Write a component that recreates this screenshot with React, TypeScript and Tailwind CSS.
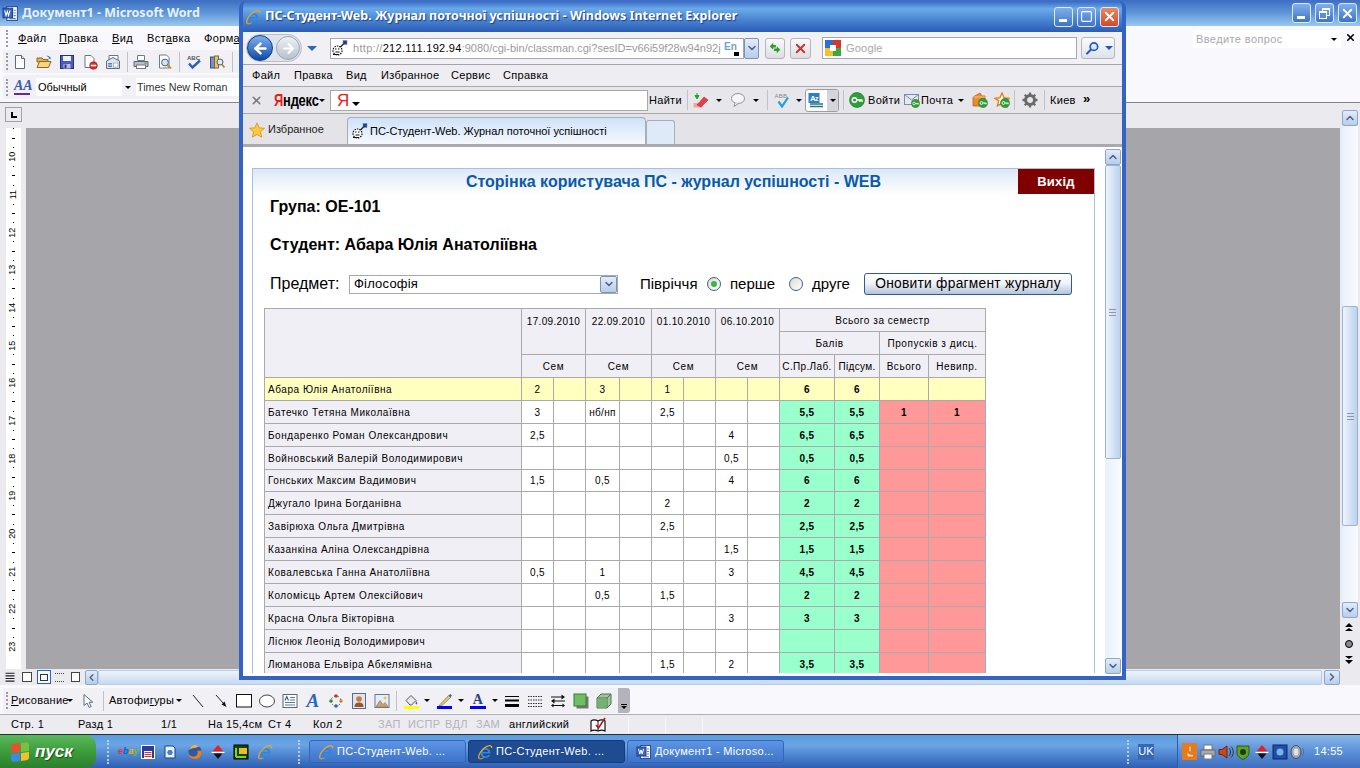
import type { ReactNode } from "react";
import { ArrowLeft, ArrowRight, ChevronDown, ChevronLeft, ChevronRight, ChevronUp, Square, X } from "lucide-react";

const Ic = ({ children, s = 16 }: { children: ReactNode; s?: number }) => (
  <svg viewBox="0 0 16 16" width={s} height={s} className="shrink-0">
    {children}
  </svg>
);

const Caret = ({ className = "" }: { className?: string }) => (
  <span className={`shrink-0 w-0 h-0 border-x-[3px] border-t-[3px] border-x-transparent border-t-black ${className}`} />
);

const Grip = ({ className = "" }: { className?: string }) => (
  <span className={`shrink-0 h-[17px] border-l-2 border-dotted border-[#9a9aa2] ${className}`} />
);

const Sep = ({ className = "" }: { className?: string }) => (
  <span className={`shrink-0 w-px h-[20px] bg-[#c2c1c8] ${className}`} />
);

const IeLogo = ({ s = 16 }: { s?: number }) => (
  <Ic s={s}>
    <path d="M13.4 9.6H5.6c.2 1.800 1.400 2.800 3 2.800 1.100 0 2-.5 2.600-1.300h2.100c-.9 1.900-2.700 3-4.800 3-3 0-5.100-2.100-5.100-5s2.200-5.100 5.100-5.100c3.200 0 5.200 2.400 4.900 5.600zM5.700 8h5.400c-.2-1.300-1.200-2.200-2.700-2.200S5.900 6.700 5.700 8z" fill="#2f86dc" fillRule="evenodd" />
    <path d="M2 14.500C.6 12 4.500 4.500 10 2.300c3-1.200 5-.7 4.700 1.800" fill="none" stroke="#eda521" strokeWidth="1.300" />
    <path d="M2 14.500c1 .8 3 .2 4.500-.6" fill="none" stroke="#eda521" strokeWidth="1" />
  </Ic>
);

const Favicon = () => (
  <Ic>
    <rect x="11" y="0.500" width="4" height="4" fill="#1d3f9c" stroke="#888" strokeWidth="0.500" />
    <path d="M11.500 4 7 8.500" stroke="#222" strokeWidth="1.300" />
    <circle cx="5.500" cy="10.500" r="4.500" fill="#fff" stroke="#111" strokeWidth="1.200" strokeDasharray="1.500 1" />
    <path d="M3 9h1.500M6 9h1.500M3.500 12h4" stroke="#111" strokeWidth="1" />
    <path d="M1 14.500h6" stroke="#111" strokeWidth="1" />
  </Ic>
);

const WordLogo = ({ s = 16 }: { s?: number }) => (
  <Ic s={s}>
    <rect x="4.500" y="1.500" width="10" height="13" fill="#fff" stroke="#2b4f98" />
    <rect x="1" y="3" width="9" height="9" fill="#3a68bb" stroke="#1d3f88" />
    <path d="M2.500 5l1.300 5 1.200-4 1.200 4 1.300-5" fill="none" stroke="#fff" strokeWidth="1" />
    <path d="M11 5h2M11 7.500h2M11 10h2M7 12.800h6" stroke="#5b7ab8" strokeWidth="1" />
  </Ic>
);

const DocNew = () => (
  <Ic>
    <path d="M3.500 1.500h6l3 3v10h-9z" fill="#fff" stroke="#5c6a80" />
    <path d="M9.500 1.500v3h3" fill="#dfe7f2" stroke="#5c6a80" />
  </Ic>
);
const FolderOpen = () => (
  <Ic>
    <path d="M1 4h5l1 1.500h5V8H1z" fill="#e0b44c" stroke="#8a6a1e" />
    <path d="M1 13.500 3.500 7.500H15l-2.500 6z" fill="#f6d57e" stroke="#8a6a1e" />
    <path d="M10 2c2-.8 3.500 0 4 1.500l.8-.6-.3 2.400-2.200-.8.7-.4C12.500 3 11.500 2.400 10 2z" fill="#2f78c8" />
  </Ic>
);
const Floppy = () => (
  <Ic>
    <rect x="1.500" y="1.500" width="13" height="13" fill="#4a5cc0" stroke="#26307a" />
    <rect x="4" y="2" width="8" height="5" fill="#eef0fa" />
    <rect x="4.500" y="10" width="7" height="4.500" fill="#b9bed4" />
    <rect x="5.500" y="10.500" width="2" height="3.500" fill="#2d3888" />
  </Ic>
);
const Perm = () => (
  <Ic>
    <path d="M3 1.500h6l3 3v9H3z" fill="#fff" stroke="#6a7486" />
    <circle cx="11.500" cy="11.500" r="3.800" fill="#d6301e" stroke="#8c1a10" strokeWidth="0.600" />
    <rect x="8.800" y="10.700" width="5.400" height="1.600" fill="#fff" />
  </Ic>
);
const MailDoc = () => (
  <Ic>
    <path d="M4 1.500h9v5H4z" fill="#fff" stroke="#6a7486" />
    <path d="M1.500 7 8 3.500 14.500 7v7.500h-13z" fill="#dfe3ea" stroke="#636c80" />
    <rect x="3" y="9" width="4" height="1.500" fill="#5e7fb8" />
    <rect x="8.500" y="9" width="4.500" height="4" fill="#f8f8fa" stroke="#7884a0" strokeWidth="0.500" />
    <rect x="3" y="11.500" width="4" height="1.500" fill="#5e7fb8" />
  </Ic>
);
const Printer = () => (
  <Ic>
    <path d="M4.500 1.500h7v5h-7z" fill="#fff" stroke="#70788a" />
    <path d="M1 7.500h14v5H1z" fill="#b8bec9" stroke="#5d6474" />
    <rect x="3.500" y="11" width="9" height="3.500" fill="#fff" stroke="#70788a" />
    <rect x="11.500" y="8.500" width="2" height="1.300" fill="#38b24a" />
  </Ic>
);
const Preview = () => (
  <Ic>
    <path d="M2.500 1h7l2.500 2.500V14H2.500z" fill="#fff" stroke="#6f7a8e" />
    <circle cx="8" cy="8.500" r="3.400" fill="#cfe2f6" stroke="#50607c" />
    <path d="m10.500 11 3.500 3.500" stroke="#c78a24" strokeWidth="2" />
  </Ic>
);
const Spell = () => (
  <Ic>
    <text x="1" y="6" fontSize="6" fontWeight="700" fontFamily="Liberation Sans" fill="#555">ABC</text>
    <path d="m3 9.500 3.500 4L14 6.500" fill="none" stroke="#2c5cc6" strokeWidth="2.400" />
  </Ic>
);
const Research = () => (
  <Ic>
    <rect x="1.500" y="3" width="4" height="11" fill="#7f8fc0" stroke="#3f4d80" />
    <rect x="5.500" y="2" width="4" height="12" fill="#e2c66e" stroke="#7f6a26" />
    <circle cx="11" cy="8" r="3" fill="#dbe8f7" stroke="#4d5c78" />
    <path d="m13 10.500 2.500 3" stroke="#b68323" strokeWidth="1.800" />
  </Ic>
);

const CursorIc = () => (
  <Ic><path d="M4 1.500v11l3-2.500 2.200 4.500 2-1L9 9.200h3.800z" fill="#fff" stroke="#5a6a8a" /></Ic>
);
const LineIc = () => (
  <Ic><path d="m3 2 10 12" stroke="#222" strokeWidth="1" /></Ic>
);
const ArrowLine = () => (
  <Ic>
    <path d="m3 2 8 9" stroke="#222" strokeWidth="1" />
    <path d="m13.500 14-5-2.500 3-3z" fill="#111" />
  </Ic>
);
const RectIc = () => (
  <Ic><rect x="0.500" y="1.500" width="15" height="12.500" fill="#fff" stroke="#111" /></Ic>
);
const OvalIc = () => (
  <Ic><ellipse cx="8" cy="8" rx="7.500" ry="6" fill="#fff" stroke="#444" /></Ic>
);
const TextBoxIc = () => (
  <Ic>
    <rect x="1" y="1.500" width="14" height="13" fill="#fff" stroke="#5d6474" />
    <path d="M8 4.500h5M8 7h5M3 9.500h10M3 12h10" stroke="#65748e" />
    <path d="M3 7.500 4.800 3.500 6.500 7.500" fill="none" stroke="#2d4f9e" strokeWidth="1.100" />
  </Ic>
);
const WordArt = () => (
  <span className="shrink-0 w-4 h-4 flex items-center justify-center text-[19px] leading-none font-bold italic text-[#2c62c0] [font-family:'Liberation_Serif',serif]">A</span>
);
const Diagram = () => (
  <Ic>
    <circle cx="8" cy="3" r="1.800" fill="#d0382c" />
    <circle cx="3" cy="8" r="1.800" fill="#3b8f3e" />
    <circle cx="13" cy="8" r="1.800" fill="#d9a521" />
    <circle cx="8" cy="13" r="1.800" fill="#2d62c4" />
    <circle cx="8" cy="8" r="5" fill="none" stroke="#555" strokeDasharray="1.500 2" />
  </Ic>
);
const Clip = () => (
  <Ic>
    <rect x="1.500" y="0.500" width="13" height="15" fill="#dfe4ee" stroke="#5f6b84" />
    <circle cx="8" cy="6" r="2.800" fill="#c97b3c" />
    <path d="M3.500 14c0-3.500 2-4.500 4.500-4.500s4.500 1 4.500 4.500z" fill="#99562a" />
  </Ic>
);
const Pic = () => (
  <Ic>
    <rect x="1" y="1.500" width="14" height="13" fill="#e4eef9" stroke="#6c7890" />
    <path d="m2 13.500 4-6 3 4 2-2 3 4z" fill="#d29f6a" stroke="#8a5f33" strokeWidth="0.500" />
    <circle cx="11" cy="5" r="1.500" fill="#f0c83c" />
  </Ic>
);
const Bucket = () => (
  <Ic>
    <path d="m3 7.500 5-5 5 5-4.500 4.500H7z" fill="#e9e9f0" stroke="#555" />
    <path d="M13 8c1.200 1.500 1.600 2.500 1 3.200-.7.300-1.400-.2-1.400-1z" fill="#2c62c0" />
    <rect x="1" y="13" width="15" height="3" fill="#ffff00" />
  </Ic>
);
const Pen = () => (
  <Ic>
    <path d="M3 11.500 11.500 2.500l2 2L5 12.500l-3 .5z" fill="#e9c46a" stroke="#6d6150" strokeWidth="0.600" />
    <path d="M11.500 2.500l2 2 1.500-2-1.500-1.500z" fill="#3f68c6" />
    <rect x="0" y="13" width="15" height="3" fill="#0000ff" />
  </Ic>
);
const FontColor = () => (
  <span className="shrink-0 w-4 h-4 relative flex justify-center text-[14px] leading-[13px] font-bold text-[#2b3f88] [font-family:'Liberation_Serif',serif]">
    A
    <span className="absolute left-0 right-0 bottom-0 h-[3px] bg-[#0000ff]" />
  </span>
);
const Lines = () => (
  <Ic><path d="M1 3h14v1H1zM1 6.500h14v2H1zM1 11h14v3H1z" fill="#000" /></Ic>
);
const Dashes = () => (
  <Ic><path d="M1 3.500h15M1 7h15M1 10.500h15M1 13.500h15" stroke="#333" strokeDasharray="1.500 1" /></Ic>
);
const Arrows = () => (
  <Ic>
    <path d="M1 4h11M4 8h11M2 12.500h12" stroke="#111" />
    <path d="m15 4-3.500-2.500v5zM1 8l3.500-2.500v5zM1 12.500l2.500-2v4zM15 12.500l-2.500-2v4z" fill="#111" />
  </Ic>
);
const ShadowBox = () => (
  <Ic>
    <rect x="3.500" y="3.500" width="12" height="12" fill="#777" />
    <rect x="1" y="1" width="12" height="12" fill="#6dbf62" stroke="#3b7a38" />
  </Ic>
);
const Cube = () => (
  <Ic>
    <path d="M1 5l4-4h10v10l-4 4H1z" fill="#9bc89a" stroke="#556f55" />
    <path d="M1 5h10v10M11 5l4-4" fill="none" stroke="#556f55" />
    <path d="M1.500 5.500h9v9h-9z" fill="#72b46e" />
  </Ic>
);
const Book = () => (
  <Ic>
    <path d="M1 4c2-1.500 4.500-1.500 7 0 2.500-1.500 5-1.500 7 0v10c-2-1-4.500-1-7 0-2.500-1-5-1-7 0z" fill="#fff" stroke="#111" strokeWidth="1.200" />
    <path d="M8 4v10" stroke="#111" />
    <path d="m6 8 2.500 3L15 1" fill="none" stroke="#b01818" strokeWidth="1.600" />
  </Ic>
);

const Highlighter = () => (
  <Ic>
    <rect x="0.500" y="11" width="9" height="4.500" fill="#f3a2a8" />
    <path d="m4 13 7-8 4 3-7 7z" fill="#ea3a44" stroke="#a31f28" strokeWidth="0.500" />
    <path d="M4 1v3M2 3.500 4 7l2-3.500z" fill="#27a02c" stroke="#27a02c" />
  </Ic>
);
const Bubble = () => (
  <Ic>
    <ellipse cx="8" cy="6.500" rx="6.500" ry="5" fill="#f6f6f9" stroke="#8d929c" />
    <path d="M5 11 4 14.500 8.500 11.500" fill="#f6f6f9" stroke="#8d929c" />
  </Ic>
);
const AbcCheck = () => (
  <Ic>
    <text x="0.500" y="6" fontSize="6" fontFamily="Liberation Sans" fill="#888">ABB</text>
    <path d="m4.500 9.500 3.500 5 6-9" fill="none" stroke="#1fa0ee" strokeWidth="2.200" />
  </Ic>
);
const Translate = () => (
  <Ic>
    <rect x="0.500" y="1" width="11" height="10" fill="#2d7fc8" />
    <text x="2" y="9" fontSize="8" fontWeight="700" fontFamily="Liberation Sans" fill="#fff">A</text>
    <text x="7" y="9" fontSize="7" fontWeight="700" fontFamily="Liberation Sans" fill="#fff">z</text>
    <path d="M2 12h13M2 14.500h13" stroke="#2a7474" strokeWidth="1.500" />
  </Ic>
);
const KeyBall = ({ s = 16 }: { s?: number }) => (
  <Ic s={s}>
    <circle cx="8" cy="8" r="7.500" fill="#2e9e38" stroke="#1b6e24" strokeWidth="0.600" />
    <circle cx="5.500" cy="8" r="2.300" fill="none" stroke="#fff" strokeWidth="1.400" />
    <path d="M8 8h5.500M11 8v2M13 8v2" stroke="#fff" strokeWidth="1.300" />
  </Ic>
);
const Envelope = () => (
  <span className="shrink-0 relative w-[17px] h-[16px]">
    <Ic>
      <rect x="0.500" y="2.500" width="14" height="10" fill="#e2e8f4" stroke="#7f8ba4" />
      <path d="m.5 2.500 7 5.500 7-5.500" fill="none" stroke="#7f8ba4" />
    </Ic>
    <span className="absolute right-0 bottom-0"><KeyBall s={9} /></span>
  </span>
);
const Wallet = () => (
  <span className="shrink-0 relative w-[18px] h-[17px]">
    <Ic>
      <path d="M1 5 8 1l2 3h3v10H1z" fill="#ec8a2c" stroke="#b05a12" strokeWidth="0.700" />
      <path d="M1 5h12" stroke="#f6c080" />
    </Ic>
    <span className="absolute right-0 bottom-0"><KeyBall s={10} /></span>
  </span>
);
const StarKey = () => (
  <span className="shrink-0 relative w-[18px] h-[17px]">
    <Ic>
      <path d="m8 1 2.100 4.800 5.100.5-3.900 3.400 1.200 5.100L8 11.200l-4.500 2.600 1.200-5.100L.8 6.300l5.100-.5z" fill="#fff" stroke="#e8801a" strokeWidth="1.400" />
    </Ic>
    <span className="absolute right-0 bottom-0"><KeyBall s={10} /></span>
  </span>
);
const Gear = () => (
  <Ic>
    <circle cx="8" cy="8" r="4.500" fill="none" stroke="#6a6a6a" strokeWidth="3" />
    <path d="M8 .5v3M8 12.500v3M.5 8h3M12.500 8h3M2.700 2.700l2.100 2.100M11.200 11.200l2.100 2.100M2.700 13.300l2.100-2.100M11.200 4.800l2.100-2.100" stroke="#6a6a6a" strokeWidth="2.300" />
  </Ic>
);
const StarFav = () => (
  <Ic>
    <path d="m8 .8 2.200 5 5.300.5-4 3.600 1.200 5.300L8 12.500l-4.700 2.700 1.200-5.300-4-3.600 5.300-.5z" fill="#fbc93a" stroke="#d08a12" strokeWidth="0.700" />
  </Ic>
);

const XpFlag = () => (
  <span className="shrink-0 grid grid-cols-2 gap-[1px] w-[18px] h-[18px] -skew-y-6">
    <span className="bg-[#e8522a] rounded-tl-[3px]" />
    <span className="bg-[#7cc13e] rounded-tr-[3px]" />
    <span className="bg-[#3d8be0] rounded-bl-[3px]" />
    <span className="bg-[#f4c12e] rounded-br-[3px]" />
  </span>
);

const XpBtn = ({ children, close = false }: { children: ReactNode; close?: boolean }) => (
  <span
    className={`shrink-0 w-[19px] h-[20px] rounded-[3px] border border-[#dfe9f8] flex items-center justify-center text-white ${
      close ? "bg-gradient-to-b from-[#e58a64] to-[#cf4a26]" : "bg-gradient-to-b from-[#7fb0ea] to-[#3f73c8]"
    }`}
  >
    {children}
  </span>
);

const ScrollBtn = ({ children, className = "" }: { children: ReactNode; className?: string }) => (
  <span className={`shrink-0 flex items-center justify-center rounded-[2px] border border-[#8fa6c8] bg-gradient-to-b from-[#e2ecfa] to-[#b7cdea] text-[#4c6185] ${className}`}>
    {children}
  </span>
);

const Ruler = () => (
  <div className="w-[15px] h-full bg-white overflow-hidden shrink-0">
    <div className="-mt-[4px]">
      {[10, 11, 12, 13, 14, 15, 16, 17, 18, 19, 20, 21, 22, 23].map((n) => (
        <div key={n} className="h-[37.7px] flex flex-col items-center text-black">
          <span className="h-[9.4px] flex items-center"><span className="w-px h-px bg-black" /></span>
          <span className="h-[9.4px] flex items-center"><span className="w-[3px] h-px bg-black" /></span>
          <span className="h-[9.4px] flex items-center"><span className="w-px h-px bg-black" /></span>
          <span className="h-[9.4px] flex items-center justify-center text-[9px] leading-none -rotate-90 whitespace-nowrap">{n}</span>
        </div>
      ))}
    </div>
  </div>
);

const WordScroll = () => (
  <div className="w-[20px] h-full shrink-0 bg-[#ebeaef] flex flex-col pl-[2px] pt-[7px]">
    <ScrollBtn className="w-[16px] h-[16px]"><ChevronUp size={12} strokeWidth={3} /></ScrollBtn>
    <div className="w-[16px] h-[180px] bg-gradient-to-r from-[#e9f1fd] to-[#f8fbff]" />
    <div className="w-[16px] h-[220px] rounded-[2px] border border-[#9db3d2] bg-gradient-to-r from-[#eef4fd] to-[#bcd2ee] flex items-center justify-center">
      <span className="w-[7px] h-[7px] border-y border-[#8b98ad] flex items-center"><span className="w-full h-px bg-[#8b98ad]" /></span>
    </div>
    <div className="w-[16px] h-[76px] bg-gradient-to-r from-[#e9f1fd] to-[#f8fbff]" />
    <ScrollBtn className="w-[16px] h-[16px]"><ChevronDown size={12} strokeWidth={3} /></ScrollBtn>
    <div className="flex flex-col items-center w-[14px] mt-[5px] gap-[8px]">
      <span className="h-[9px] flex flex-col items-center"><Caret className="rotate-180 border-x-[4px] border-t-[4px]" /><Caret className="rotate-180 border-x-[4px] border-t-[3px] mt-px" /></span>
      <span className="w-[8px] h-[8px] rounded-full bg-[#888] border border-black" />
      <span className="h-[9px] flex flex-col items-center"><Caret className="border-x-[4px] border-t-[3px]" /><Caret className="border-x-[4px] border-t-[4px] mt-px" /></span>
    </div>
  </div>
);

type Cell = string;
const rows: { name: string; v: Cell[]; a: string; b: string; abs?: [string, string]; h?: string; me?: boolean }[] = [
  { name: "Абара Юлія Анатоліївна", v: ["2", "", "3", "", "1", "", "", ""], a: "6", b: "6", me: true },
  { name: "Батечко Тетяна Миколаївна", v: ["3", "", "нб/нп", "", "2,5", "", "", ""], a: "5,5", b: "5,5", abs: ["1", "1"] },
  { name: "Бондаренко Роман Олександрович", v: ["2,5", "", "", "", "", "", "4", ""], a: "6,5", b: "6,5" },
  { name: "Войновський Валерій Володимирович", v: ["", "", "", "", "", "", "0,5", ""], a: "0,5", b: "0,5" },
  { name: "Гонських Максим Вадимович", v: ["1,5", "", "0,5", "", "", "", "4", ""], a: "6", b: "6", h: "h-[22px]" },
  { name: "Джугало Ірина Богданівна", v: ["", "", "", "", "2", "", "", ""], a: "2", b: "2" },
  { name: "Завірюха Ольга Дмитрівна", v: ["", "", "", "", "2,5", "", "", ""], a: "2,5", b: "2,5" },
  { name: "Казанкіна Аліна Олександрівна", v: ["", "", "", "", "", "", "1,5", ""], a: "1,5", b: "1,5" },
  { name: "Ковалевська Ганна Анатоліївна", v: ["0,5", "", "1", "", "", "", "3", ""], a: "4,5", b: "4,5" },
  { name: "Коломієць Артем Олексійович", v: ["", "", "0,5", "", "1,5", "", "", ""], a: "2", b: "2" },
  { name: "Красна Ольга Вікторівна", v: ["", "", "", "", "", "", "3", ""], a: "3", b: "3" },
  { name: "Ліснюк Леонід Володимирович", v: ["", "", "", "", "", "", "", ""], a: "", b: "" },
  { name: "Люманова Ельвіра Абкелямівна", v: ["", "", "", "", "1,5", "", "2", ""], a: "3,5", b: "3,5" },
];

const cell = "border border-[#aaaaaa] p-0 text-center align-middle";
const head = `${cell} bg-[#f0eff5] font-normal tracking-[0.55px]`;

const Journal = () => (
  <table className="table-fixed border-collapse w-[722px] text-[10px] tracking-[0.35px] text-black">
    <colgroup>
      <col className="w-[257px]" />
      <col className="w-[32px]" />
      <col className="w-[32px]" />
      <col className="w-[34px]" />
      <col className="w-[32px]" />
      <col className="w-[32px]" />
      <col className="w-[32px]" />
      <col className="w-[32px]" />
      <col className="w-[32px]" />
      <col className="w-[55px]" />
      <col className="w-[45px]" />
      <col className="w-[49px]" />
      <col className="w-[57px]" />
    </colgroup>
    <thead>
      <tr className="h-[23px]">
        <th rowSpan={3} className={head} />
        {["17.09.2010", "22.09.2010", "01.10.2010", "06.10.2010"].map((d) => (
          <th key={d} colSpan={2} rowSpan={2} className={`${cell} bg-[#f0eff5] font-normal !align-top pt-[5px]`}>{d}</th>
        ))}
        <th colSpan={4} className={head}>Всього за семестр</th>
      </tr>
      <tr className="h-[23px]">
        <th colSpan={2} className={head}>Балів</th>
        <th colSpan={2} className={head}>Пропусків з дисц.</th>
      </tr>
      <tr className="h-[23px]">
        {[0, 1, 2, 3].map((i) => (
          <th key={i} colSpan={2} className={head}>Сем</th>
        ))}
        <th className={`${cell} bg-[#f0eff5] font-normal`}>С.Пр.Лаб.</th>
        <th className={`${cell} bg-[#f0eff5] font-normal`}>Підсум.</th>
        <th className={head}>Всього</th>
        <th className={head}>Невипр.</th>
      </tr>
    </thead>
    <tbody>
      {rows.map((r) => (
        <tr key={r.name} className={r.h ?? "h-[23px]"}>
          <td className={`${cell} !text-left pl-[3px] tracking-[0.55px] ${r.me ? "bg-[#ffffc0]" : "bg-[#f0eff5]"}`}>{r.name}</td>
          {r.v.map((v, i) => (
            <td key={i} className={`${cell} ${r.me ? "bg-[#ffffc0]" : "bg-white"}`}>{v}</td>
          ))}
          <td className={`${cell} font-bold ${r.me ? "bg-[#ffffc0]" : "bg-[#99ffcc]"}`}>{r.a}</td>
          <td className={`${cell} font-bold ${r.me ? "bg-[#ffffc0]" : "bg-[#99ffcc]"}`}>{r.b}</td>
          <td className={`${cell} font-bold ${r.me ? "bg-[#ffffc0]" : "bg-[#ff9999]"}`}>{r.abs?.[0]}</td>
          <td className={`${cell} font-bold ${r.me ? "bg-[#ffffc0]" : "bg-[#ff9999]"}`}>{r.abs?.[1]}</td>
        </tr>
      ))}
    </tbody>
  </table>
);

const IeWindow = () => (
  <div className="absolute left-[239px] top-[1px] w-[887px] h-[679px] rounded-t-[7px] border-x-[4px] border-b-[4px] border-[#3363c4] bg-[#3363c4] flex flex-col overflow-hidden">
    {/* title */}
    <div className="h-[31px] shrink-0 flex items-center -mx-[4px] px-[6px] bg-gradient-to-b from-[#3a68c6] via-[#6aaae8] via-25% to-[#2b5cb6] text-white">
      <IeLogo />
      <span className="ml-[4px] text-[12.5px] font-bold [font-family:'Noto_Sans',sans-serif] [text-shadow:1px_1px_1px_#1a3f88] whitespace-nowrap">
        ПС-Студент-Web. Журнал поточної успішності - Windows Internet Explorer
      </span>
      <span className="ml-auto flex gap-[4px] mr-[1px]">
        <XpBtn><span className="w-[8px] h-[3px] bg-white mt-[8px] -ml-[2px]" /></XpBtn>
        <XpBtn><Square size={13} strokeWidth={2} /></XpBtn>
        <XpBtn close><X size={15} strokeWidth={3} /></XpBtn>
      </span>
    </div>

    {/* nav row */}
    <div className="h-[33px] shrink-0 flex items-center bg-[#f1f0f4] text-[11px] border-b border-[#a4a4a8]">
      <span className="ml-[3px] w-[56px] h-[28px] shrink-0 rounded-full bg-[#dfe3ea] border border-[#b9bec8] flex items-center justify-between">
        <span className="w-[26px] h-[26px] rounded-full bg-gradient-to-b from-[#7fb0ee] to-[#0f48a8] border border-[#0e3c8c] flex items-center justify-center text-white">
          <ArrowLeft size={17} strokeWidth={3.500} />
        </span>
        <span className="w-[24px] h-[24px] mr-px rounded-full bg-gradient-to-b from-[#eef1f5] to-[#b5c0d0] border border-[#9aa6b6] flex items-center justify-center text-white">
          <ArrowRight size={15} strokeWidth={3.500} />
        </span>
      </span>
      <Caret className="ml-[5px] border-x-[5px] border-t-[5px] !border-t-[#2c66b8]" />
      <span className="ml-[13px] w-[414px] h-[21px] shrink-0 bg-white border border-[#a5a8ae] flex items-center overflow-hidden whitespace-nowrap">
        <span className="ml-px"><Favicon /></span>
        <span className="ml-[5px] w-[369px] tracking-[0.3px] text-[#9a9a9f]">
          http://<span className="text-black">212.111.192.94</span><span className="tracking-[0px]">:9080/cgi-bin/classman.cgi?sesID=v66i59f28w94n92j</span>
        </span>
        <span className="relative ml-[2px] w-[15px] h-[15px] text-[10px] font-bold leading-[11px] text-[#6ea2d8]">
          En
          <span className="absolute right-0 bottom-0 w-[5px] h-[4px] bg-black" />
        </span>
      </span>
      <ScrollBtn className="w-[15px] h-[21px] !border-[#7d93b4]"><ChevronDown size={12} strokeWidth={3} /></ScrollBtn>
      <span className="ml-[6px] w-[20px] h-[21px] shrink-0 rounded-[3px] border border-[#b4b6bc] bg-gradient-to-b from-[#fafafc] to-[#dcdce2] flex items-center justify-center">
        <Ic s={14}>
          <path d="M2 6 6 2v2.500h3V7.500H6V10zM14 10l-4 4v-2.500H7V8.500h3V6z" fill="#2f9a2e" />
        </Ic>
      </span>
      <span className="ml-[5px] w-[21px] h-[21px] shrink-0 rounded-[3px] border border-[#b4b6bc] bg-gradient-to-b from-[#fafafc] to-[#dcdce2] flex items-center justify-center text-[#c8342a]">
        <X size={15} strokeWidth={3} />
      </span>
      <span className="ml-[11px] w-[255px] h-[22px] shrink-0 bg-white border border-[#a5a8ae] flex items-center">
        <span className="relative w-[16px] h-[16px] ml-[2px] shrink-0 grid grid-cols-2">
          <span className="bg-[#2d6fd8]" />
          <span className="bg-[#d8382c]" />
          <span className="bg-[#f4c12e]" />
          <span className="bg-[#3fa648]" />
          <span className="absolute inset-[5px] bg-white" />
        </span>
        <span className="ml-[5px] text-[#a6a6aa] tracking-[0.2px]">Google</span>
      </span>
      <span className="ml-[4px] w-[34px] h-[22px] shrink-0 rounded-[3px] border border-[#b4b6bc] bg-gradient-to-b from-[#fbfbfd] to-[#dfe2ea] flex items-center">
        <span className="w-[21px] flex justify-center">
          <Ic s={15}>
            <circle cx="9.500" cy="6" r="4" fill="#dceafc" stroke="#1d57c8" strokeWidth="1.800" />
            <path d="M6.500 9 1.500 14" stroke="#1d57c8" strokeWidth="2.200" />
          </Ic>
        </span>
        <Caret className="ml-[2px] border-x-[4px] border-t-[4px] !border-t-[#1d57c8]" />
      </span>
    </div>

    {/* menu row */}
    <div className="h-[22px] shrink-0 flex items-center pl-[9px] bg-[#eeedf1] text-[11px] tracking-[0.3px] text-black border-b border-[#a9a9ad]">
      <span className="w-[42px]">Файл</span>
      <span className="w-[52px]">Правка</span>
      <span className="w-[35px]">Вид</span>
      <span className="w-[70px]">Избранное</span>
      <span className="w-[52px]">Сервис</span>
      <span>Справка</span>
    </div>

    {/* yandex row */}
    <div className="h-[27px] shrink-0 flex items-center bg-[#e7e6eb] text-[11px] tracking-[0.3px] text-black border-b border-[#a9a9ad]">
      <X size={13} strokeWidth={3} className="ml-[7px] text-[#7b7b80] shrink-0" />
      <span className="ml-[11px] w-[40px] text-[17px] font-bold leading-none tracking-[-0.3px] whitespace-nowrap origin-left scale-x-[0.76]">
        <span className="text-[#e8201a]">Я</span>ндекс
      </span>
      <Caret className="ml-[5px]" />
      <span className="ml-[5px] w-[318px] h-[21px] shrink-0 bg-white border border-[#a5a8ae] flex items-center pl-[6px]">
        <span className="text-[#e8201a] text-[17px] leading-none">Я</span>
        <Caret className="ml-[2px] mt-[8px] border-x-[4px] border-t-[4px]" />
      </span>
      <span className="ml-px w-[33px]">Найти</span>
      <Sep className="ml-[5px]" />
      <span className="ml-[5px]"><Highlighter /></span>
      <Caret className="ml-[7px]" />
      <span className="ml-[8px]"><Bubble /></span>
      <Caret className="ml-[7px]" />
      <Sep className="ml-[8px]" />
      <span className="ml-[6px]"><AbcCheck /></span>
      <Caret className="ml-[6px]" />
      <span className="ml-[3px] w-[34px] h-[23px] shrink-0 rounded-[3px] border border-[#9c9ca2] bg-white flex items-center">
        <span className="ml-[2px]"><Translate /></span>
        <span className="ml-[3px] flex-1 h-full bg-[#d4d4da] flex items-center justify-center rounded-r-[3px]"><Caret /></span>
      </span>
      <Sep className="ml-[4px]" />
      <span className="ml-[5px]"><KeyBall /></span>
      <span className="ml-[3px] w-[32px]">Войти</span>
      <span className="ml-[4px]"><Envelope /></span>
      <span className="ml-px w-[33px]">Почта</span>
      <Caret className="ml-[4px]" />
      <span className="ml-[8px]"><Wallet /></span>
      <span className="ml-[6px]"><StarKey /></span>
      <Sep className="ml-[4px]" />
      <span className="ml-[7px]"><Gear /></span>
      <Sep className="ml-[6px]" />
      <span className="ml-[5px] w-[26px]">Киев</span>
      <span className="ml-[7px] -mt-[4px] text-[13px] font-bold leading-none">»</span>
    </div>

    {/* tab row */}
    <div className="h-[33px] shrink-0 flex items-end bg-[#e4e3e8] text-[11px] border-b-[3px] border-[#a9a9ae]">
      <span className="self-center mt-[1px] ml-[6px]"><StarFav /></span>
      <span className="self-center ml-[3px] w-[79px] text-[#222]">Избранное</span>
      <span className="w-[299px] h-[27px] shrink-0 rounded-t-[4px] border border-b-0 border-[#a8adb8] bg-gradient-to-b from-[#cde2f9] to-[#f6f9fd] flex items-center pl-[4px]">
        <Favicon />
        <span className="ml-[2px] whitespace-nowrap">ПС-Студент-Web. Журнал поточної успішності</span>
      </span>
      <span className="w-[29px] h-[24px] shrink-0 rounded-t-[3px] border border-b-0 border-[#a8adb8] bg-[#dfeaf8]" />
    </div>

    {/* page */}
    <div className="flex-1 min-h-0 flex bg-white">
      <div className="w-[860px] h-[526px] shrink-0 overflow-hidden pl-[9px] pt-[21px]">
        <div className="w-[843px] border-x border-t border-[#a9c0dc] h-[520px]">
          <div className="relative h-[26px] bg-gradient-to-b from-[#dce8f6] to-white flex justify-center items-center">
            <span className="text-[16px] font-bold text-[#0b5aa8]">Сторінка користувача ПС - журнал успішності - WEB</span>
            <span className="absolute right-0 top-0 w-[76px] h-[25px] bg-[#800000] text-white text-[13px] font-bold flex items-center justify-center tracking-[0.2px]">Вихід</span>
          </div>
          <div className="pl-[17px] text-[16px] font-bold text-black leading-[24px]">Група: ОЕ-101</div>
          <div className="pl-[17px] mt-[14px] text-[16px] font-bold text-black leading-[24px]">Студент: Абара Юлія Анатоліївна</div>
          <div className="mt-[15px] h-[24px] flex items-center text-[15px] text-black">
            <span className="ml-[17px] w-[79px] text-[16px]">Предмет:</span>
            <span className="w-[269px] h-[19px] shrink-0 border border-[#a7a9ad] flex items-center justify-between pl-[4px] text-[13px] tracking-[0.2px]">
              Філософія
              <ScrollBtn className="w-[17px] h-[17px] !border-[#7d93b4]"><ChevronDown size={12} strokeWidth={3} /></ScrollBtn>
            </span>
            <span className="ml-[22px] w-[67px]">Півріччя</span>
            <span className="w-[14px] h-[14px] shrink-0 rounded-full border border-[#3f5f84] bg-gradient-to-br from-[#dcdcd6] to-white flex items-center justify-center">
              <span className="w-[6px] h-[6px] rounded-full bg-[#3fb544]" />
            </span>
            <span className="ml-[9px] w-[59px]">перше</span>
            <span className="w-[14px] h-[14px] shrink-0 rounded-full border border-[#3f5f84] bg-gradient-to-br from-[#dcdcd6] to-white" />
            <span className="ml-[9px] w-[52px]">друге</span>
            <span className="w-[208px] h-[22px] shrink-0 rounded-[3px] border border-[#2f5a94] bg-gradient-to-b from-white via-[#eef1f6] to-[#b5c4da] flex items-center justify-center text-[13.8px] tracking-[0.25px]">
              Оновити фрагмент журналу
            </span>
          </div>
          <div className="ml-[11px] mt-[12px]">
            <Journal />
          </div>
        </div>
      </div>
      {/* scrollbar */}
      <div className="w-[19px] shrink-0 pt-[2px] flex flex-col items-center bg-white">
        <ScrollBtn className="w-[16px] h-[16px]"><ChevronUp size={12} strokeWidth={3} /></ScrollBtn>
        <div className="w-[16px] h-[294px] rounded-[2px] border border-[#9db3d2] bg-gradient-to-r from-[#eef4fd] to-[#bcd2ee] flex items-center justify-center">
          <span className="w-[7px] h-[7px] border-y border-[#8b98ad] flex items-center"><span className="w-full h-px bg-[#8b98ad]" /></span>
        </div>
        <div className="w-[16px] flex-1 bg-gradient-to-r from-[#e9f1fd] to-[#f8fbff]" />
        <ScrollBtn className="w-[16px] h-[16px]"><ChevronDown size={12} strokeWidth={3} /></ScrollBtn>
        <div className="h-[2px]" />
      </div>
    </div>
  </div>
);

const TaskBtn = ({ label, active = false, word = false }: { label: string; active?: boolean; word?: boolean }) => (
  <span
    className={`h-[23px] w-[157px] shrink-0 rounded-[3px] flex items-center pl-[8px] text-[11px] tracking-[0.3px] text-white whitespace-nowrap ${
      active ? "bg-[#1e4b92] border border-[#173a78]" : "bg-gradient-to-b from-[#5e95e4] to-[#3d73ca] border border-[#3565b8]"
    }`}
  >
    {word ? <WordLogo /> : <IeLogo />}
    <span className="ml-[3px]">{label}</span>
  </span>
);

const Lines2 = () => (
  <Ic s={12}>
    <path d="M2 3h12M2 6.500h12M2 10h12M2 13.500h12" stroke="#222" strokeWidth="1.600" />
  </Ic>
);

const App = () => {
  return (
    <div className="relative w-[1360px] h-[768px] overflow-hidden flex flex-col bg-[#f9f8fc] [font-family:'Liberation_Sans',Arial,sans-serif]">
      {/* Word title */}
      <div className="h-[26px] shrink-0 flex items-center pl-[2px] pr-[3px] bg-gradient-to-b from-[#3d6ec2] via-[#5f96d8] to-[#9ac8f0] text-[#e8f1fb]">
        <WordLogo s={17} />
        <span className="ml-[3px] text-[12.5px] font-bold [font-family:'Noto_Sans',sans-serif] whitespace-nowrap">Документ1 - Microsoft Word</span>
        <span className="ml-auto flex gap-[4px]">
          <XpBtn><span className="w-[8px] h-[3px] bg-white mt-[8px] -ml-[2px]" /></XpBtn>
          <XpBtn>
            <span className="relative w-[11px] h-[11px]">
              <span className="absolute right-0 top-0 w-[8px] h-[8px] border border-t-2 border-white" />
              <span className="absolute left-0 bottom-0 w-[8px] h-[8px] border border-t-2 border-white bg-[#5b8ed8]" />
            </span>
          </XpBtn>
          <XpBtn><X size={15} strokeWidth={3} /></XpBtn>
        </span>
      </div>

      {/* Word menu */}
      <div className="h-[24px] shrink-0 flex items-center pl-[6px] text-[11px] tracking-[0.35px] text-black">
        <Grip />
        <span className="ml-[10px] w-[41px]"><u>Ф</u>айл</span>
        <span className="w-[53px]"><u>П</u>равка</span>
        <span className="w-[35px]"><u>В</u>ид</span>
        <span className="w-[57px]">Вст<u>а</u>вка</span>
        <span>Форм<u>а</u>т</span>
        <span className="ml-auto mr-[19px] w-[148px] h-[18px] -mb-[2px] bg-white text-[#a8a8ae] pl-[3px] flex items-center tracking-[0.4px]">
          Введите вопрос
          <Caret className="ml-auto mr-[4px]" />
        </span>
        <X size={11} strokeWidth={3.500} className="absolute right-[4px] top-[32px] text-black" />
      </div>

      {/* Word standard toolbar */}
      <div className="h-[25px] shrink-0">
        <div className="w-[300px] h-[23px] ml-[3px] rounded-l-[3px] bg-[#f1f0f5] flex items-center pl-[3px]">
          <Grip />
          <span className="ml-[4px]"><DocNew /></span>
          <span className="ml-[8px]"><FolderOpen /></span>
          <span className="ml-[7px]"><Floppy /></span>
          <span className="ml-[7px]"><Perm /></span>
          <span className="ml-[7px]"><MailDoc /></span>
          <Sep className="ml-[6px]" />
          <span className="ml-[5px]"><Printer /></span>
          <span className="ml-[8px]"><Preview /></span>
          <Sep className="ml-[6px]" />
          <span className="ml-[6px]"><Spell /></span>
          <span className="ml-[7px]"><Research /></span>
          <Sep className="ml-[7px]" />
        </div>
      </div>

      {/* Word format toolbar */}
      <div className="h-[27px] shrink-0">
        <div className="w-[300px] h-[24px] ml-[3px] rounded-l-[3px] bg-[#f1f0f5] flex items-center pl-[3px] text-[11px] text-black">
          <Grip />
          <span className="ml-[6px] w-[16px] text-[14px] font-bold italic leading-none text-[#3a5cb0] border-b-2 border-[#6a2a8a] [font-family:'Liberation_Serif',serif]">AA</span>
          <span className="ml-[6px] w-[97px] h-[18px] bg-white flex items-center pl-[2px]">
            Обычный
            <span className="ml-auto w-[11px] h-full bg-[#f1f0f5] flex items-center justify-center"><Caret /></span>
          </span>
          <span className="ml-[3px] w-[105px] h-[18px] bg-white flex items-center pl-px whitespace-nowrap text-[#333] text-[10.7px]">Times New Roman</span>
        </div>
      </div>
      <div className="h-px shrink-0 bg-[#85858b]" />

      {/* Word body */}
      <div className="h-[566px] shrink-0 flex">
        <div className="flex-1 flex flex-col bg-[#ebeaef]">
          <div className="h-[25px] shrink-0 pl-[5px] pt-[4px]">
            <span className="w-[17px] h-[15px] border border-[#a0a0a6] flex items-center justify-center text-[#111]">
              <span className="w-[6px] h-[6px] border-l-2 border-b-2 border-black" />
            </span>
          </div>
          <div className="flex-1 min-h-0 flex pl-[6px]">
            <Ruler />
            <div className="ml-[5px] flex-1 bg-[#a6a5aa]" />
          </div>
        </div>
        <WordScroll />
      </div>

      {/* Word horizontal scroll */}
      <div className="h-[16px] shrink-0 flex items-center bg-[#ebeaef] pl-[4px] pr-[20px]">
        <Lines2 />
        <span className="ml-[6px] w-[10px] h-[10px] border border-[#444] bg-white shrink-0" />
        <span className="ml-[5px] w-[14px] h-[14px] border border-[#2c62c0] bg-[#f5f8fd] flex items-center justify-center shrink-0"><span className="w-[8px] h-[7px] border border-[#333]" /></span>
        <span className="ml-[4px] w-[9px] h-[9px] border-y border-dotted border-[#444] shrink-0" />
        <span className="ml-[7px] w-[9px] h-[10px] border border-[#444] bg-white shrink-0" />
        <ScrollBtn className="ml-[5px] w-[13px] h-[15px]"><ChevronLeft size={11} strokeWidth={3} /></ScrollBtn>
        <div className="flex-1 h-[15px] rounded-[2px] border border-[#b6cbe6] bg-gradient-to-b from-[#eef4fd] to-[#c6d9f1]" />
        <ScrollBtn className="ml-[2px] w-[16px] h-[15px]"><ChevronRight size={12} strokeWidth={3} /></ScrollBtn>
      </div>

      {/* Drawing toolbar */}
      <div className="h-[29px] shrink-0 pt-[3px]">
        <div className="w-[627px] h-[25px] ml-[3px] rounded-[3px] bg-[#f1f0f5] flex items-center pl-[3px] text-[11px] tracking-[0.25px] text-black">
          <Grip />
          <span className="ml-[3px] w-[54px] whitespace-nowrap"><u>Р</u>исование</span>
          <Caret className="ml-[2px]" />
          <span className="ml-[7px]"><CursorIc /></span>
          <Sep className="ml-[7px]" />
          <span className="ml-[5px] w-[64px] whitespace-nowrap">Автофи<u>г</u>уры</span>
          <Caret className="ml-[3px]" />
          <span className="ml-[8px] flex gap-[7px]">
            <LineIc />
            <ArrowLine />
            <RectIc />
            <OvalIc />
            <TextBoxIc />
            <WordArt />
            <Diagram />
            <Clip />
            <Pic />
          </span>
          <Sep className="ml-[6px]" />
          <span className="ml-[6px]"><Bucket /></span>
          <Caret className="ml-[5px]" />
          <span className="ml-[7px]"><Pen /></span>
          <Caret className="ml-[5px]" />
          <span className="ml-[6px]"><FontColor /></span>
          <Caret className="ml-[6px]" />
          <span className="ml-[6px] flex gap-[7px]">
            <Lines />
            <Dashes />
            <Arrows />
            <ShadowBox />
            <Cube />
          </span>
          <span className="ml-auto w-[12px] h-full rounded-r-[3px] bg-[#b4b3ba] flex flex-col justify-end items-center pb-[4px]">
            <span className="w-[6px] h-px bg-black mb-px" />
            <Caret />
          </span>
        </div>
      </div>

      {/* Status bar */}
      <div className="h-[20px] shrink-0 bg-[#ecebf0] border-t border-[#b0b0b6] flex items-center text-[11px] tracking-[0.3px] text-black whitespace-nowrap">
        <span className="ml-[11px] w-[67px]">Стр. 1</span>
        <span className="w-[83px]">Разд 1</span>
        <span className="w-[47px]">1/1</span>
        <span className="w-[60px]">На 15,4см</span>
        <span className="w-[45px]">Ст 4</span>
        <span className="w-[65px]">Кол 2</span>
        <span className="w-[30px] text-[#b4b4ba]">ЗАП</span>
        <span className="w-[37px] text-[#b4b4ba]">ИСПР</span>
        <span className="w-[31px] text-[#b4b4ba]">ВДЛ</span>
        <span className="w-[33px] text-[#b4b4ba]">ЗАМ</span>
        <span className="w-[81px]">английский</span>
        <Book />
        <span className="ml-[22px] w-px h-[16px] bg-[#f8f8fb]" />
        <span className="ml-[36px] w-px h-[16px] bg-[#f8f8fb]" />
        <span className="ml-[36px] w-px h-[16px] bg-[#f8f8fb]" />
      </div>
      <div className="h-px shrink-0 bg-[#26332c]" />

      {/* Taskbar */}
      <div className="h-[33px] shrink-0 flex items-center bg-gradient-to-b from-[#5c9be0] via-[#6aa5e5] via-30% to-[#2f5eb3]">
        <span className="w-[96px] h-full shrink-0 rounded-r-[10px] bg-gradient-to-b from-[#5cb85c] via-[#3a9e3a] to-[#2d7f2d] flex items-center pl-[11px] text-white text-[17px] font-bold italic [text-shadow:1px_1px_1px_#1a4f1a]">
          <XpFlag />
          <span className="ml-[6px] leading-none">пуск</span>
        </span>
        <span className="ml-[11px] h-[24px] border-l-2 border-dotted border-[#b4cdf0]" />
        <span className="ml-[9px] w-[16px] text-[9px] font-bold italic leading-none whitespace-nowrap">
          <span className="text-[#e53238]">e</span><span className="text-[#0064d2]">b</span><span className="text-[#f5af02]">a</span><span className="text-[#86b817]">y</span>
        </span>
        <span className="ml-[6px]">
          <Ic>
            <rect x="1.500" y="1.500" width="13" height="13" fill="#2a3aa0" stroke="#fff" />
            <rect x="4" y="7" width="8" height="7" fill="#fff" />
            <path d="M4.500 8.500h7M4.500 10.500h7M4.500 12.500h7" stroke="#d8302c" />
          </Ic>
        </span>
        <span className="ml-[6px]">
          <Ic>
            <path d="M3 2h8l2 2v10H3z" fill="#e8f0fb" stroke="#16407f" />
            <circle cx="8" cy="8.500" r="3.300" fill="#3f82d8" stroke="#fff" />
          </Ic>
        </span>
        <span className="ml-[9px]">
          <Ic>
            <circle cx="8" cy="8" r="6.800" fill="#3157a8" />
            <path d="M14.500 6.500C15.800 11 12.500 15 8 15 4 15 .8 12 1 7.500c.6 3 2.500 5 5.500 5 3.500 0 5-3 3.800-5.800C12 7 13.500 6.500 14.500 6.500z" fill="#e8801e" />
            <path d="M2 6c.5-2.500 3-5 6-5 1.500 0 3 .5 4 1.500L8 4C6 4 3.500 4.500 2 6z" fill="#f2b23c" />
          </Ic>
        </span>
        <span className="ml-[7px]">
          <Ic>
            <path d="M8 1 13.500 7.500h-11z" fill="#e82020" />
            <rect x="1.500" y="7.800" width="13" height="1.200" fill="#fff" />
            <path d="M8 15 3.500 9.500h9z" fill="#111" />
          </Ic>
        </span>
        <span className="ml-[7px]">
          <Ic>
            <rect x="1" y="1" width="14" height="14" fill="#141" stroke="#000" />
            <path d="M3 13V4M3 13h10" stroke="#7cd81e" strokeWidth="2" />
            <rect x="6" y="4" width="8" height="6" fill="#e8c020" />
          </Ic>
        </span>
        <span className="ml-[8px]"><IeLogo /></span>
        <span className="ml-[25px] h-[24px] border-l-2 border-dotted border-[#b4cdf0]" />
        <span className="ml-[9px]"><TaskBtn label="ПС-Студент-Web. ..." /></span>
        <span className="ml-[2px]"><TaskBtn label="ПС-Студент-Web. ..." active /></span>
        <span className="ml-[2px]"><TaskBtn label="Документ1 - Microso..." word /></span>
        <span className="ml-[343px] h-[24px] border-l-2 border-dotted border-[#b4cdf0]" />
        <span className="ml-[9px] w-[16px] h-[16px] bg-[#3568b8] text-white text-[11px] flex items-center justify-center">UK</span>
        <span className="ml-auto w-[183px] h-full shrink-0 bg-gradient-to-b from-[#8ab8ea] via-[#5b90d8] to-[#3f6fbf] border-l border-[#2a5cb0] flex items-center pl-[2px] text-white text-[11px]">
          <span className="ml-[2px] w-[15px] h-[17px] bg-[#e87a1a] text-white flex items-center justify-center">
            <Ic s={12}>
              <path d="M8 1v6M5 13h7M5 10c0 1.500 1.500 2.500 3.500 2.500" fill="none" stroke="#fff" strokeWidth="1.500" />
            </Ic>
          </span>
          <span className="ml-[3px]">
            <Ic>
              <rect x="4" y="1" width="8" height="5" fill="#fff" stroke="#777" />
              <rect x="1" y="6" width="14" height="6" fill="#a8aab0" stroke="#66686e" />
              <rect x="4" y="10" width="8" height="5" fill="#fff" stroke="#777" />
            </Ic>
          </span>
          <span className="ml-[2px]">
            <Ic>
              <path d="M1 5.500h3L9 2v12l-5-3.500H1z" fill="#c8481e" stroke="#6e260e" />
              <path d="M11 4c2 2 2 6 0 8M13 2.500c3 3 3 8 0 11" fill="none" stroke="#333" />
            </Ic>
          </span>
          <span className="ml-px">
            <Ic>
              <path d="M2 2h12v7c0 3-3 5-6 6.500C5 14 2 12 2 9z" fill="#5fa32a" stroke="#2e5a12" />
              <circle cx="8" cy="8" r="3" fill="#1f3d0c" />
            </Ic>
          </span>
          <span className="ml-[3px]">
            <Ic>
              <path d="M8 1 13.500 7.500h-11z" fill="#e82020" />
              <rect x="1.500" y="7.800" width="13" height="1.200" fill="#fff" />
              <path d="M8 15 3.500 9.500h9z" fill="#111" />
            </Ic>
          </span>
          <span className="ml-[2px]">
            <Ic>
              <rect x="1" y="1" width="14" height="14" fill="#1d4fa8" stroke="#0c2a66" />
              <circle cx="8" cy="8" r="3.500" fill="#7fb0e8" />
            </Ic>
          </span>
          <span className="ml-px">
            <Ic>
              <ellipse cx="7" cy="8" rx="5" ry="6.500" fill="#9ea6b4" stroke="#555" />
              <ellipse cx="7" cy="8" rx="2.500" ry="3.500" fill="#dfe3ea" />
              <path d="M13.500 4c1.500 2.500 1.500 5.500 0 8" fill="none" stroke="#5470b0" />
            </Ic>
          </span>
          <span className="ml-[9px] tracking-[0.3px]">14:55</span>
        </span>
      </div>

      <IeWindow />
    </div>
  );
};

export default App;
